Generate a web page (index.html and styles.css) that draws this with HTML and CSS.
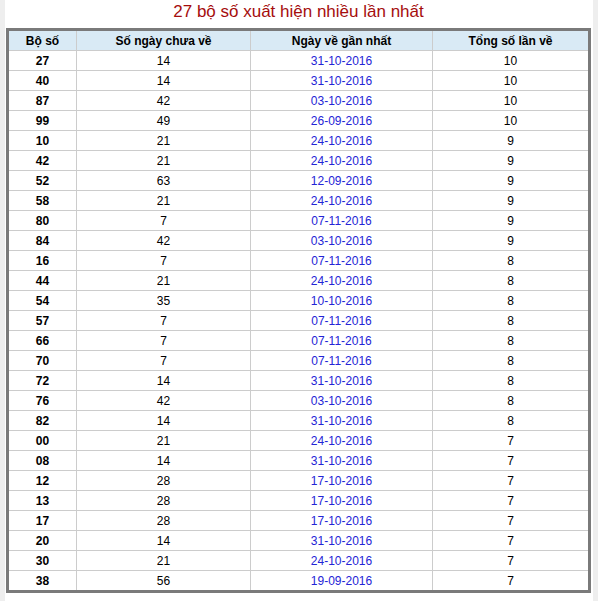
FILE: index.html
```html
<!DOCTYPE html>
<html lang="vi">
<head>
<meta charset="utf-8">
<title>27 bộ số xuất hiện nhiều lần nhất</title>
<link rel="stylesheet" href="styles.css">
</head>
<body>
<div class="page">
  <h2 class="title">27 bộ số xuất hiện nhiều lần nhất</h2>
  <table class="stats">
    <thead>
      <tr>
        <th class="c1">Bộ số</th>
        <th class="c2">Số ngày chưa về</th>
        <th class="c3">Ngày về gần nhất</th>
        <th class="c4">Tổng số lần về</th>
      </tr>
    </thead>
    <tbody>
      <tr><td class="c1">27</td><td class="c2">14</td><td class="c3 date">31-10-2016</td><td class="c4">10</td></tr>
      <tr><td class="c1">40</td><td class="c2">14</td><td class="c3 date">31-10-2016</td><td class="c4">10</td></tr>
      <tr><td class="c1">87</td><td class="c2">42</td><td class="c3 date">03-10-2016</td><td class="c4">10</td></tr>
      <tr><td class="c1">99</td><td class="c2">49</td><td class="c3 date">26-09-2016</td><td class="c4">10</td></tr>
      <tr><td class="c1">10</td><td class="c2">21</td><td class="c3 date">24-10-2016</td><td class="c4">9</td></tr>
      <tr><td class="c1">42</td><td class="c2">21</td><td class="c3 date">24-10-2016</td><td class="c4">9</td></tr>
      <tr><td class="c1">52</td><td class="c2">63</td><td class="c3 date">12-09-2016</td><td class="c4">9</td></tr>
      <tr><td class="c1">58</td><td class="c2">21</td><td class="c3 date">24-10-2016</td><td class="c4">9</td></tr>
      <tr><td class="c1">80</td><td class="c2">7</td><td class="c3 date">07-11-2016</td><td class="c4">9</td></tr>
      <tr><td class="c1">84</td><td class="c2">42</td><td class="c3 date">03-10-2016</td><td class="c4">9</td></tr>
      <tr><td class="c1">16</td><td class="c2">7</td><td class="c3 date">07-11-2016</td><td class="c4">8</td></tr>
      <tr><td class="c1">44</td><td class="c2">21</td><td class="c3 date">24-10-2016</td><td class="c4">8</td></tr>
      <tr><td class="c1">54</td><td class="c2">35</td><td class="c3 date">10-10-2016</td><td class="c4">8</td></tr>
      <tr><td class="c1">57</td><td class="c2">7</td><td class="c3 date">07-11-2016</td><td class="c4">8</td></tr>
      <tr><td class="c1">66</td><td class="c2">7</td><td class="c3 date">07-11-2016</td><td class="c4">8</td></tr>
      <tr><td class="c1">70</td><td class="c2">7</td><td class="c3 date">07-11-2016</td><td class="c4">8</td></tr>
      <tr><td class="c1">72</td><td class="c2">14</td><td class="c3 date">31-10-2016</td><td class="c4">8</td></tr>
      <tr><td class="c1">76</td><td class="c2">42</td><td class="c3 date">03-10-2016</td><td class="c4">8</td></tr>
      <tr><td class="c1">82</td><td class="c2">14</td><td class="c3 date">31-10-2016</td><td class="c4">8</td></tr>
      <tr><td class="c1">00</td><td class="c2">21</td><td class="c3 date">24-10-2016</td><td class="c4">7</td></tr>
      <tr><td class="c1">08</td><td class="c2">14</td><td class="c3 date">31-10-2016</td><td class="c4">7</td></tr>
      <tr><td class="c1">12</td><td class="c2">28</td><td class="c3 date">17-10-2016</td><td class="c4">7</td></tr>
      <tr><td class="c1">13</td><td class="c2">28</td><td class="c3 date">17-10-2016</td><td class="c4">7</td></tr>
      <tr><td class="c1">17</td><td class="c2">28</td><td class="c3 date">17-10-2016</td><td class="c4">7</td></tr>
      <tr><td class="c1">20</td><td class="c2">14</td><td class="c3 date">31-10-2016</td><td class="c4">7</td></tr>
      <tr><td class="c1">30</td><td class="c2">21</td><td class="c3 date">24-10-2016</td><td class="c4">7</td></tr>
      <tr><td class="c1">38</td><td class="c2">56</td><td class="c3 date">19-09-2016</td><td class="c4">7</td></tr>
    </tbody>
  </table>
</div>
</body>
</html>
```

FILE: styles.css
```css
html, body {
  margin: 0;
  padding: 0;
  background: #eeeeee;
}

body {
  font-family: "Liberation Sans", Arial, sans-serif;
  font-size: 12px;
  color: #000;
}

.page {
  width: 588px;
  margin-left: 5px;
  min-height: 601px;
  background: #fff;
  padding: 0 0 0 1px;
  box-sizing: border-box;
}

.title {
  margin: 0;
  height: 28px;
  line-height: 24px;
  font-size: 17px;
  font-weight: normal;
  color: #a50d0d;
  text-align: center;
  width: 585px;
}

.stats {
  border-collapse: separate;
  border-spacing: 0;
  border: 3px solid #7a7a7a;
  table-layout: fixed;
  width: 585px;
}

.stats th,
.stats td {
  padding: 1px 0 0 0;
  height: 18px;
  line-height: 18px;
  text-align: center;
  border-right: 1px solid #cccccc;
  border-bottom: 1px solid #cccccc;
  white-space: nowrap;
  overflow: hidden;
}

.stats th {
  background: #d9eaf5;
  font-weight: bold;
}

.stats tbody tr:last-child td {
  border-bottom: none;
}

.stats .c1 { width: 67px; font-weight: bold; }
.stats .c2 { width: 173px; }
.stats .c3 { width: 181px; }
.stats .c4 { width: 155px; border-right: none; }

.stats .date {
  color: #2424d6;
}
```
